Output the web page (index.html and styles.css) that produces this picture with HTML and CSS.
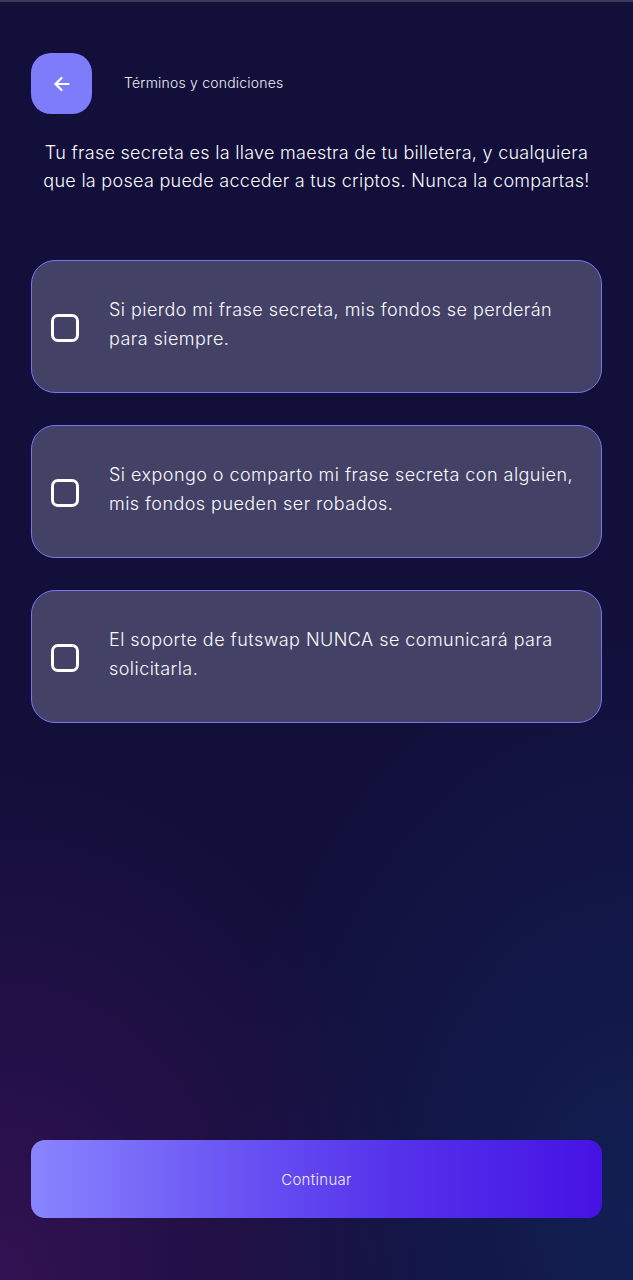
FILE: index.html
```html
<!DOCTYPE html>
<html lang="es">
<head>
<meta charset="utf-8">
<link rel="stylesheet" href="styles.css">
</head>
<body>
<div class="screen">
  <header class="topbar">
    <button class="back" aria-label="Volver">
      <svg width="20" height="20" viewBox="0 0 20 20" fill="none" stroke="#ffffff" stroke-width="2.2" stroke-linecap="round" stroke-linejoin="round"><path d="M16.5 10H3.5"/><path d="M9.5 4L3.5 10L9.5 16"/></svg>
    </button>
    <span class="title">Términos y condiciones</span>
  </header>
  <p class="intro">Tu frase secreta es la llave maestra de tu billetera, y cualquiera que la posea puede acceder a tus criptos. Nunca la compartas!</p>
  <div class="list">
    <label class="card"><span class="check"></span><span class="text">Si pierdo mi frase secreta, mis fondos se perderán para siempre.</span></label>
    <label class="card"><span class="check"></span><span class="text">Si expongo o comparto mi frase secreta con alguien, mis fondos pueden ser robados.</span></label>
    <label class="card"><span class="check"></span><span class="text">El soporte de futswap NUNCA se comunicará para solicitarla.</span></label>
  </div>
  <div class="spacer"></div>
  <button class="cta">Continuar</button>
</div>
</body>
</html>
```

FILE: styles.css
```css
html, body {
  margin: 0;
  padding: 0;
}
body {
  width: 633px;
  height: 1280px;
  overflow: hidden;
  font-family: Inter, "Noto Sans", sans-serif;
  color: #ffffff;
  background:
    radial-gradient(ellipse 420px 520px at 0% 100%, rgba(60, 18, 90, 0.75), rgba(60, 18, 90, 0) 100%),
    radial-gradient(ellipse 420px 600px at 100% 95%, rgba(18, 36, 90, 0.75), rgba(18, 36, 90, 0) 100%),
    #120f3a;
}
.screen {
  box-sizing: border-box;
  height: 1280px;
  border-top: 2px solid #3a3a58;
  padding: 51px 31px 62px;
  display: flex;
  flex-direction: column;
}
.topbar {
  display: flex;
  align-items: center;
  gap: 32px;
}
.back {
  width: 61px;
  height: 61px;
  border: none;
  border-radius: 20px;
  background: #7f7cfb;
  display: flex;
  align-items: center;
  justify-content: center;
  padding: 0;
}
.title {
  font-size: 14px;
  font-weight: 300;
  color: #f0f0f8;
  letter-spacing: 0.2px;
  margin-top: -2px;
}
.intro {
  margin: 25px 0 0;
  text-align: center;
  font-size: 18px;
  font-weight: 300;
  letter-spacing: 0.28px;
  line-height: 28px;
  color: #fafaff;
  padding: 0;
}
.list {
  margin-top: 65px;
  display: flex;
  flex-direction: column;
  gap: 32px;
}
.card {
  box-sizing: border-box;
  height: 133px;
  border: 1px solid #7d73f2;
  border-radius: 24px;
  background: #434266;
  display: flex;
  align-items: center;
  padding: 0 24px 0 19px;
  gap: 30px;
}
.check {
  flex: none;
  box-sizing: border-box;
  width: 28px;
  height: 28px;
  margin-top: 3px;
  border: 3px solid #ffffff;
  border-radius: 7px;
}
.text {
  font-size: 18px;
  font-weight: 300;
  letter-spacing: 0.45px;
  line-height: 29px;
  color: #fafaff;
  margin-top: -5px;
}
.spacer {
  flex: 1;
}
.cta {
  height: 78px;
  border: none;
  border-radius: 14px;
  background: linear-gradient(90deg, #8985ff 0%, #6a55f3 35%, #5431ea 65%, #4612e4 100%);
  color: #f0ecff;
  font-family: Inter, "Noto Sans", sans-serif;
  font-size: 15px;
  font-weight: 300;
  letter-spacing: 0.3px;
}
```
